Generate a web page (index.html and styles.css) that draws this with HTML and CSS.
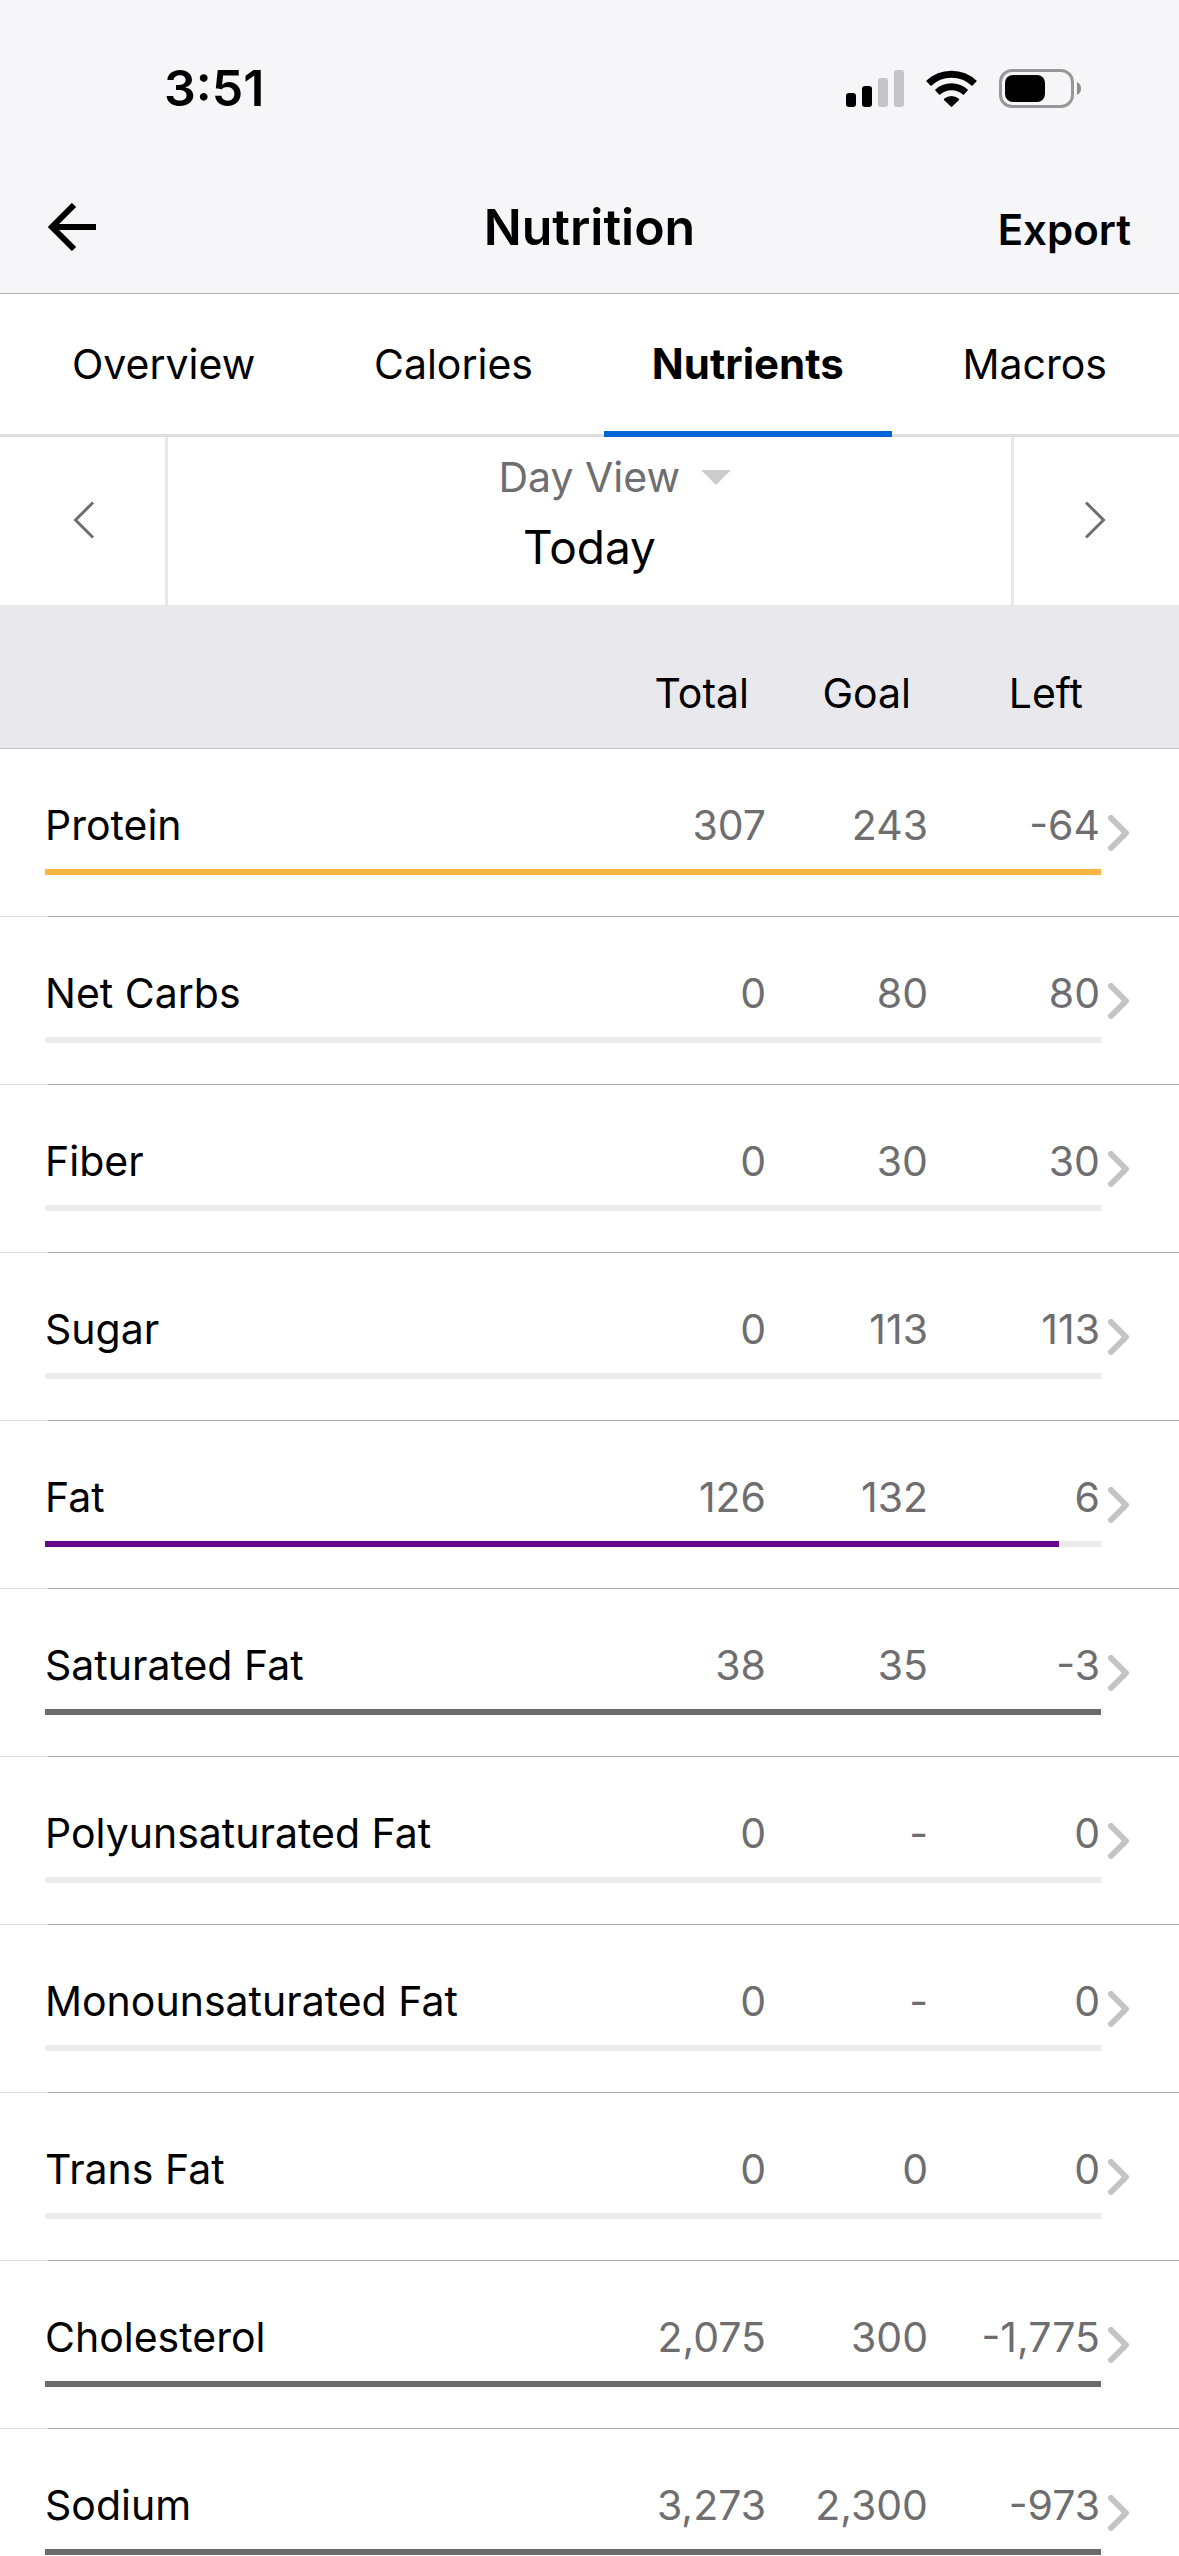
FILE: index.html
```html
<!DOCTYPE html>
<html lang="en">
<head>
<meta charset="UTF-8" />
<meta name="viewport" content="width=device-width, initial-scale=1" />
<title>Nutrition</title>
<link rel="stylesheet" href="styles.css">
</head>
<body>

<!-- Chevron shared by all nutrient rows -->
<svg class="sprite" aria-hidden="true">
  <symbol id="chevron" viewBox="0 0 22 36">
    <path d="M3 3 L18 18 L3 33" fill="none" stroke="#c4c4c6" stroke-width="6" stroke-linecap="round" stroke-linejoin="round" />
  </symbol>
</svg>

<div class="app">

  <header class="header">
    <div class="status-bar">
      <span class="time">3:51</span>
      <div class="status-icons">
        <svg width="58" height="37" viewBox="0 0 58 37" aria-hidden="true">
          <rect x="0" y="23" width="10" height="14" rx="3" />
          <rect x="16" y="16" width="10" height="21" rx="3" />
          <rect x="32" y="8" width="10" height="29" rx="3" fill="#c5c5c7" />
          <rect x="48" y="0" width="10" height="37" rx="3" fill="#c5c5c7" />
        </svg>
        <svg width="51" height="37" viewBox="0 0 51 37" aria-hidden="true">
          <path d="M2.5 13.5 A33.2 33.2 0 0 1 48.5 13.5" fill="none" stroke="#000" stroke-width="7" />
          <path d="M11.2 22.5 A20.7 20.7 0 0 1 39.8 22.5" fill="none" stroke="#000" stroke-width="6.8" />
          <path d="M18.2 30.2 Q17.4 29.3 18.4 28.5 Q21.5 26 25.5 26 Q29.5 26 32.6 28.5 Q33.6 29.3 32.8 30.2 L26.2 36.6 Q25.5 37.3 24.8 36.6 Z" />
        </svg>
        <svg width="82" height="39" viewBox="0 0 82 39" aria-hidden="true">
          <rect x="1.5" y="1.5" width="72" height="36" rx="11.5" fill="none" stroke="#98989a" stroke-width="3" />
          <rect x="6" y="6" width="40" height="27" rx="8" />
          <path d="M78 13 Q82 15 82 19.5 Q82 24 78 26 Z" fill="#8e8e90" />
        </svg>
      </div>
    </div>

    <div class="nav-bar">
      <button class="back-btn" aria-label="Back">
        <svg width="48" height="48" viewBox="0 0 48 48" aria-hidden="true">
          <path d="M48 24 H5 M26 2 L4 24 L26 46" fill="none" stroke="#000" stroke-width="6" />
        </svg>
      </button>
      <h1>Nutrition</h1>
      <button class="export-btn">Export</button>
    </div>
  </header>

  <nav class="tabs">
    <a href="#overview" class="tab">Overview</a>
    <a href="#calories" class="tab">Calories</a>
    <a href="#nutrients" class="tab active" aria-current="page">Nutrients</a>
    <a href="#macros" class="tab">Macros</a>
  </nav>

  <div class="date-nav">
    <button class="date-btn" aria-label="Previous day">
      <svg width="22" height="38" viewBox="0 0 22 38" aria-hidden="true">
        <path d="M20 1.5 L2.5 19 L20 36.5" fill="none" stroke="#6e6e70" stroke-width="3" />
      </svg>
    </button>
    <div class="date-info">
      <div class="view-picker">
        <select class="view-select" aria-label="View">
          <option>Day View</option>
        </select>
        <svg class="caret" width="30" height="15" viewBox="0 0 30 15" aria-hidden="true">
          <path d="M0 0 H30 L15 15 Z" fill="#ccc" />
        </svg>
      </div>
      <div class="date-label">Today</div>
    </div>
    <button class="date-btn" aria-label="Next day">
      <svg width="22" height="38" viewBox="0 0 22 38" aria-hidden="true">
        <path d="M2 1.5 L19.5 19 L2 36.5" fill="none" stroke="#6e6e70" stroke-width="3" />
      </svg>
    </button>
  </div>

  <table class="nutrients">
    <thead>
      <tr>
        <td></td>
        <th scope="col">Total</th>
        <th scope="col">Goal</th>
        <th scope="col">Left</th>
      </tr>
    </thead>
    <tbody>
      <tr>
        <th scope="row">Protein</th><td>307</td><td>243</td><td>-64</td>
        <td class="more"><a href="#protein" aria-label="Protein"><svg width="22" height="36"><use href="#chevron" /></svg></a></td>
        <td class="track"><div class="fill protein" style="width: 100%"></div></td>
      </tr>
      <tr>
        <th scope="row">Net Carbs</th><td>0</td><td>80</td><td>80</td>
        <td class="more"><a href="#net-carbs" aria-label="Net Carbs"><svg width="22" height="36"><use href="#chevron" /></svg></a></td>
        <td class="track"><div class="fill" style="width: 0%"></div></td>
      </tr>
      <tr>
        <th scope="row">Fiber</th><td>0</td><td>30</td><td>30</td>
        <td class="more"><a href="#fiber" aria-label="Fiber"><svg width="22" height="36"><use href="#chevron" /></svg></a></td>
        <td class="track"><div class="fill" style="width: 0%"></div></td>
      </tr>
      <tr>
        <th scope="row">Sugar</th><td>0</td><td>113</td><td>113</td>
        <td class="more"><a href="#sugar" aria-label="Sugar"><svg width="22" height="36"><use href="#chevron" /></svg></a></td>
        <td class="track"><div class="fill" style="width: 0%"></div></td>
      </tr>
      <tr>
        <th scope="row">Fat</th><td>126</td><td>132</td><td>6</td>
        <td class="more"><a href="#fat" aria-label="Fat"><svg width="22" height="36"><use href="#chevron" /></svg></a></td>
        <td class="track"><div class="fill fat" style="width: 96%"></div></td>
      </tr>
      <tr>
        <th scope="row">Saturated Fat</th><td>38</td><td>35</td><td>-3</td>
        <td class="more"><a href="#saturated-fat" aria-label="Saturated Fat"><svg width="22" height="36"><use href="#chevron" /></svg></a></td>
        <td class="track"><div class="fill" style="width: 100%"></div></td>
      </tr>
      <tr>
        <th scope="row">Polyunsaturated Fat</th><td>0</td><td>-</td><td>0</td>
        <td class="more"><a href="#polyunsaturated-fat" aria-label="Polyunsaturated Fat"><svg width="22" height="36"><use href="#chevron" /></svg></a></td>
        <td class="track"><div class="fill" style="width: 0%"></div></td>
      </tr>
      <tr>
        <th scope="row">Monounsaturated Fat</th><td>0</td><td>-</td><td>0</td>
        <td class="more"><a href="#monounsaturated-fat" aria-label="Monounsaturated Fat"><svg width="22" height="36"><use href="#chevron" /></svg></a></td>
        <td class="track"><div class="fill" style="width: 0%"></div></td>
      </tr>
      <tr>
        <th scope="row">Trans Fat</th><td>0</td><td>0</td><td>0</td>
        <td class="more"><a href="#trans-fat" aria-label="Trans Fat"><svg width="22" height="36"><use href="#chevron" /></svg></a></td>
        <td class="track"><div class="fill" style="width: 0%"></div></td>
      </tr>
      <tr>
        <th scope="row">Cholesterol</th><td>2,075</td><td>300</td><td>-1,775</td>
        <td class="more"><a href="#cholesterol" aria-label="Cholesterol"><svg width="22" height="36"><use href="#chevron" /></svg></a></td>
        <td class="track"><div class="fill" style="width: 100%"></div></td>
      </tr>
      <tr>
        <th scope="row">Sodium</th><td>3,273</td><td>2,300</td><td>-973</td>
        <td class="more"><a href="#sodium" aria-label="Sodium"><svg width="22" height="36"><use href="#chevron" /></svg></a></td>
        <td class="track"><div class="fill" style="width: 100%"></div></td>
      </tr>
    </tbody>
  </table>

</div>

</body>
</html>
```

FILE: styles.css
```css
* {
  box-sizing: border-box;
}
body {
  font-family: Inter, "Liberation Sans", sans-serif;
  font-size: 41px;
  line-height: 50px;
  margin: 0;
  background: #fff;
  color: #000;
}
button,
select {
  font: inherit;
  color: inherit;
  background: none;
  border: none;
  margin: 0;
  padding: 0;
  cursor: pointer;
}
a {
  color: inherit;
  text-decoration: none;
}
svg {
  display: block;
}
.sprite {
  display: none;
}

/* App fills the screen, rows run off the bottom */
.app {
  height: 100vh;
  overflow: hidden;
}

/* Header */
.header {
  background: #f6f6f9;
  border-bottom: 1px solid #adadb0;
  padding-bottom: 15px;
}
.status-bar {
  display: flex;
  justify-content: space-between;
  align-items: center;
  height: 176px;
  padding: 0 98px 0 164px;
}
.time {
  font-size: 50px;
  font-weight: 600;
}
.status-icons {
  display: flex;
  align-items: center;
  gap: 22px;
}
.nav-bar {
  display: grid;
  grid-template-columns: 1fr auto 1fr;
  align-items: end;
  padding: 21px 48px;
}
.nav-bar h1 {
  font-size: 50px;
  font-weight: 600;
  line-height: 60px;
  margin: 0;
}
.back-btn {
  justify-self: start;
  align-self: center;
}
.export-btn {
  justify-self: end;
  font-size: 42px;
  font-weight: 600;
  line-height: 54px;
}

/* Tabs */
.tabs {
  display: flex;
  justify-content: space-between;
  height: 143px;
  padding: 0 24px;
  border-bottom: 3px solid #dedede;
}
.tab {
  height: 143px;
  padding: 45px 48px 0;
}
.tab.active {
  font-size: 42px;
  font-weight: 700;
  border-bottom: 6px solid #0063d6;
}

/* Day switcher */
.date-nav {
  display: grid;
  grid-template-columns: 168px 1fr 168px;
  height: 168px;
}
.date-btn {
  display: flex;
  align-items: center;
  justify-content: center;
  padding: 0 0 3px 3px;
  border-right: 3px solid #e8e8ea;
}
.date-btn:last-child {
  padding: 0 3px 3px 0;
  border-right: none;
  border-left: 3px solid #e8e8ea;
}
.date-info {
  padding-top: 15px;
  text-align: center;
}
.view-picker {
  display: grid;
  grid-template-columns: 1fr auto 1fr;
  align-items: center;
  gap: 20px;
  color: #6e6e70;
}
.view-select {
  appearance: none;
  grid-column: 2;
  height: 50px;
}
.date-label {
  font-size: 46px;
  line-height: 60px;
  margin-top: 15px;
}

/* Nutrient table */
.nutrients,
.nutrients thead,
.nutrients tbody {
  display: block;
}
.nutrients th,
.nutrients td {
  display: block;
  padding: 0;
  font-weight: 400;
  text-align: right;
}
.nutrients tr {
  display: grid;
  grid-template-columns: 1fr 162px 162px 172px 78px;
  padding-left: 45px;
}
.nutrients thead tr {
  background: #e9e9ed;
  border-bottom: 1px solid #c0c0c4;
  padding-top: 63px;
  padding-bottom: 30px;
}
.nutrients thead th {
  padding-right: 18px;
}
.nutrients tbody tr {
  grid-template-rows: 50px 6px;
  row-gap: 19px;
  padding-top: 51px;
  padding-bottom: 42px;
  background: linear-gradient(to right, #dcdcdc 48px, #aaa 48px) bottom / 100% 1px no-repeat;
}
.nutrients tbody td {
  padding-right: 1px;
  color: #6e6e70;
}
.nutrients tbody th {
  text-align: left;
}
.nutrients .more {
  grid-row: 1 / 3;
  grid-column: 5;
}
.more a {
  display: flex;
  align-items: center;
  height: 66px;
  padding-left: 7px;
}

/* Progress bar */
.nutrients tbody .track {
  grid-row: 2;
  grid-column: 1 / 5;
  padding: 0;
  background: #ebebeb;
}
.fill {
  height: 6px;
  background: #6c6c6d;
}
.fill.protein {
  background: #fbb344;
}
.fill.fat {
  background: #650a8a;
}
```
